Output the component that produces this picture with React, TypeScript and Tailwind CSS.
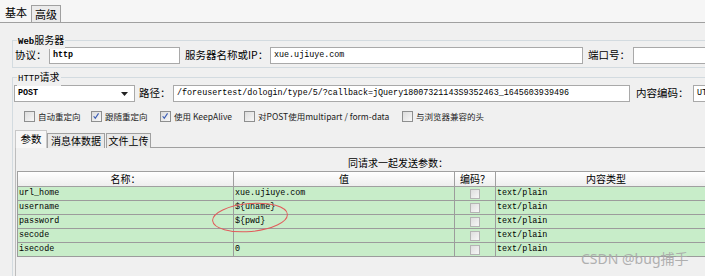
import React from "react";

const cjk = "font-['Noto_Sans_CJK_SC','Noto_Sans',sans-serif]";
const mono = "font-['Liberation_Mono','Noto_Sans_CJK_SC',monospace]";

function Box({ checked = false }: { checked?: boolean }) {
  return (
    <div className="relative h-[11px] w-[11px] shrink-0 border border-[#8e8f8f] bg-gradient-to-br from-[#dcdcdc] to-[#f8f8f8]">
      {checked && (
        <svg viewBox="0 0 11 11" className="absolute left-0 top-0 h-[9px] w-[9px]">
          <path d="M2 5.2 L4 7.6 L8 1.6" fill="none" stroke="#3d5fb5" strokeWidth="1.4" />
        </svg>
      )}
    </div>
  );
}

const options = [
  { label: "自动重定向", checked: false, w: "w-[67px]" },
  { label: "跟随重定向", checked: true, w: "w-[69px]" },
  { label: "使用 KeepAlive", checked: true, w: "w-[84px]" },
  { label: "对POST使用multipart / form-data", checked: false, w: "w-[158px]" },
  { label: "与浏览器兼容的头", checked: false, w: "w-[120px]" },
];

const rows = [
  { name: "url_home", value: "xue.ujiuye.com" },
  { name: "username", value: "${uname}" },
  { name: "password", value: "${pwd}" },
  { name: "secode", value: "" },
  { name: "isecode", value: "0" },
];

const label = "shrink-0 whitespace-nowrap text-[10.5px] leading-none";
const input = "flex h-[17px] shrink-0 items-center overflow-hidden whitespace-nowrap border border-[#a9a9a9] bg-white pl-[3px] text-[8.4px]";

export default function App() {
  return (
    <div className={`relative h-[276px] w-[705px] overflow-hidden bg-[#f0f0f0] text-[11px] text-black ${cjk}`}>
      {/* top tabs */}
      <div className="flex h-[23px] items-end border-b border-[#a0a0a0] bg-[#f6f6f6] pl-[4px]">
        <div className="flex h-[19px] items-center px-[1px] leading-none">基本</div>
        <div className="ml-[3px] flex h-[17px] items-center border border-b-0 border-[#a0a0a0] bg-[#ebebeb] px-[3px] leading-none">
          高级
        </div>
      </div>

      {/* Web server group */}
      <div className="relative ml-[12px] mt-[17px] h-[28px] border-l border-t border-b border-[#d3dbe0]">
        <div className="absolute left-[4px] top-[-8px] whitespace-nowrap bg-[#f0f0f0] px-[1px] text-[10px] leading-[14px]">
          <span className={`${mono} font-bold text-[9px]`}>Web</span>服务器
        </div>
        <div className="mt-[6px] flex h-[17px] items-center overflow-hidden">
          <span className={`${label} w-[36px] pl-[2px]`}>协议：</span>
          <div className={`${input} w-[131px] font-bold ${mono}`}>http</div>
          <span className={`${label} w-[90px] pl-[5px]`}>服务器名称或IP：</span>
          <div className={`${input} w-[313px] ${mono}`}>xue.ujiuye.com</div>
          <span className={`${label} w-[50px] pl-[5px]`}>端口号：</span>
          <div className={`${input} w-[80px]`} />
        </div>
      </div>

      {/* HTTP request group */}
      <div className="relative ml-[12px] mt-[9px] h-[200px] border-l border-t border-[#d3dbe0]">
        <div className="absolute left-[4px] top-[-8px] whitespace-nowrap bg-[#f0f0f0] px-[1px] text-[10px] leading-[14px]">
          <span className={`${mono} text-[9px]`}>HTTP</span>请求
        </div>
        <div className="ml-[1px] mt-[7px] flex h-[17px] items-center overflow-hidden">
          <div className={`${input} w-[121px] justify-between pr-[6px] font-bold ${mono}`}>
            <span>POST</span>
            <svg viewBox="0 0 7 4" className="h-[4px] w-[7px]">
              <path d="M0 0 L7 0 L3.5 4 Z" fill="#222" />
            </svg>
          </div>
          <span className={`${label} w-[38px] pl-[4px]`}>路径：</span>
          <div className={`${input} w-[457px] ${mono}`}>
            /foreusertest/dologin/type/5/?callback=jQuery18007321143S9352463_1645603939496
          </div>
          <span className={`${label} w-[63px] pl-[6px]`}>内容编码：</span>
          <div className={`${input} w-[40px] pl-[2px] ${mono}`}>UTF-8</div>
        </div>

        <div className="ml-[11px] mt-[9px] flex h-[11px] items-center">
          {options.map((o) => (
            <div key={o.label} className={`flex shrink-0 items-center ${o.w}`}>
              <Box checked={o.checked} />
              <span className="ml-[3px] whitespace-nowrap text-[8.5px] leading-none text-[#222]">{o.label}</span>
            </div>
          ))}
        </div>

        {/* inner tabs */}
        <div className="ml-[2px] mt-[8px] flex h-[18px] items-end">
          <div className="flex h-[18px] w-[32px] shrink-0 items-center justify-center whitespace-nowrap border-l border-t border-r border-[#c8c8c8] bg-[#f7f7f7] text-[10.5px] leading-none">
            参数
          </div>
          <div className="flex h-[15px] w-[58px] shrink-0 items-center justify-center whitespace-nowrap border border-b-0 border-[#a0a0a0] bg-[#e9e9e9] text-[10px] leading-none">
            消息体数据
          </div>
          <div className="ml-[1px] flex h-[15px] w-[45px] shrink-0 items-center justify-center whitespace-nowrap border border-b-0 border-[#a0a0a0] bg-[#e9e9e9] text-[10px] leading-none">
            文件上传
          </div>
          <div className="flex-1 border-b border-[#a0a0a0]" />
        </div>

        {/* panel */}
        <div className="ml-[2px] h-[130px] border-l border-[#bdbdbd] pl-[1px]">
          <div className="whitespace-nowrap pl-[331px] pt-[8px] text-[10px] leading-[14px]">同请求一起发送参数：</div>
          <div className="mt-[1px] w-[700px]">
            <div className="flex h-[16px] border border-[#a0a0a0] bg-gradient-to-b from-white to-[#eeeeee] text-[10px] leading-none">
              <div className="flex w-[216px] shrink-0 items-center justify-center border-r border-[#a0a0a0]">名称：</div>
              <div className="flex w-[221px] shrink-0 items-center justify-center border-r border-[#a0a0a0]">值</div>
              <div className="flex w-[41px] shrink-0 items-center justify-center whitespace-nowrap border-r border-[#a0a0a0]">编码？</div>
              <div className="flex w-[220px] shrink-0 items-center justify-center">内容类型</div>
            </div>
            {rows.map((r) => (
              <div key={r.name} className={`flex h-[14px] border-b border-l border-[#9c9c9c] bg-[#c8edc9] text-[8.4px] leading-none ${mono}`}>
                <div className="flex w-[216px] shrink-0 items-center border-r border-[#9c9c9c] pl-[1px]">{r.name}</div>
                <div className="flex w-[221px] shrink-0 items-center border-r border-[#9c9c9c] pl-[1px]">{r.value}</div>
                <div className="flex w-[41px] shrink-0 items-center justify-center border-r border-[#9c9c9c]">
                  <div className="h-[10px] w-[10px] border border-[#b4b4b4] bg-gradient-to-br from-[#dedede] to-[#f6f6f6]" />
                </div>
                <div className="flex w-[220px] shrink-0 items-center pl-[1px]">text/plain</div>
              </div>
            ))}
          </div>
        </div>
      </div>

      {/* red annotation ellipse */}
      <svg className="pointer-events-none absolute left-[210px] top-[201px] h-[34px] w-[80px]" viewBox="0 0 80 34">
        <ellipse cx="40" cy="16.5" rx="37.5" ry="14" fill="none" stroke="#e25b5b" strokeWidth="1" transform="rotate(-5 40 16.5)" />
      </svg>

      {/* watermark */}
      <div className="pointer-events-none absolute left-[581px] top-[250px] whitespace-nowrap font-['Noto_Sans','Noto_Sans_CJK_SC',sans-serif] text-[14px] leading-[18px] text-[#a9a9a9] opacity-90">
        CSDN @bug捕手
      </div>
    </div>
  );
}
